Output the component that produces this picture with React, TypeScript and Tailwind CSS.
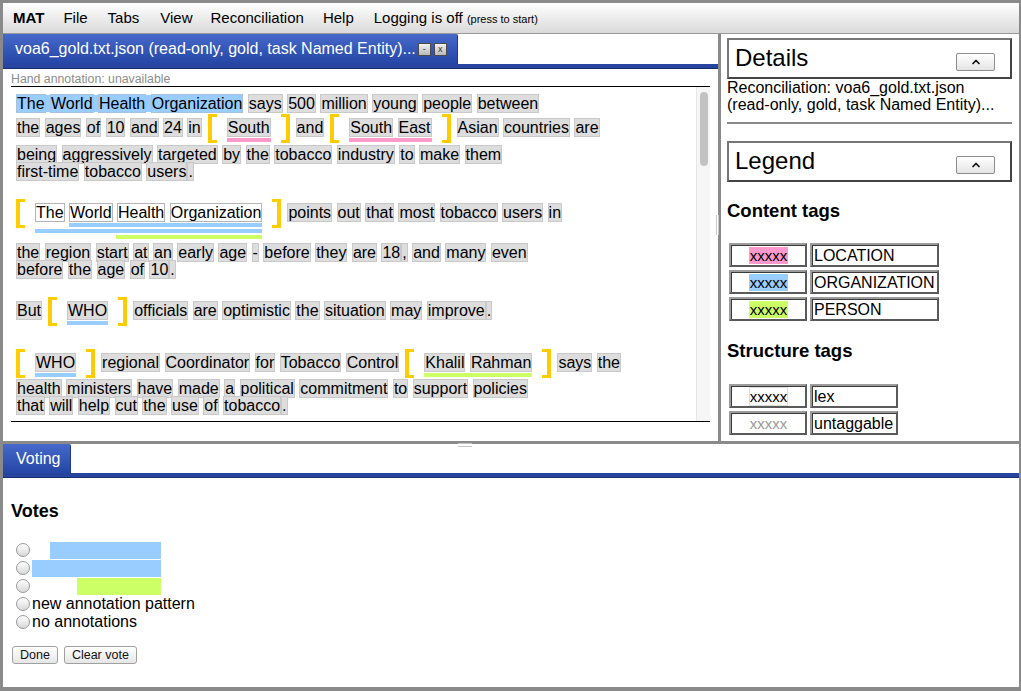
import { Fragment, type ReactNode } from 'react';
import { ChevronUp } from 'lucide-react';

// Reconciliation view: document pane, details/legend sidebar and voting pane

type Tok = { t: string; sp: boolean };
type Bar = { cls: string };

const BOX: Record<string, string> = {
  grey: 'bg-[#dddddd] border border-[#c9c9c9]',
  white: 'bg-white border border-[#b5b5b5]',
  blue: 'border border-[#a6c2e0]',
};

const tokenize = (s: string): Tok[] =>
  s.split(' ').flatMap((w, i) => {
    const m = w.match(/^(.+?)([.,]?)$/)!;
    const out: Tok[] = [{ t: m[1], sp: i > 0 }];
    if (m[2]) out.push({ t: m[2], sp: false });
    return out;
  });

const Words = ({ text, tone = 'grey' }: { text: string; tone?: string }) => (
  <span className="relative top-[1px] whitespace-pre">
    {tokenize(text).map((k, i) => (
      <Fragment key={i}>
        {k.sp ? ' ' : ''}
        <span className={BOX[tone]}>{k.t}</span>
      </Fragment>
    ))}
  </span>
);

const Plain = ({ text }: { text: string }) => (
  <div className="h-[17px] whitespace-nowrap">
    <Words text={text} />
  </div>
);

const Blank = () => <div className="h-[17px]" />;

const Row = ({ children, pb = 'pb-[3px]' }: { children: ReactNode; pb?: string }) => (
  <div className={`flex items-start pt-[3px] ${pb} whitespace-nowrap`}>{children}</div>
);

const Seg = ({ text }: { text: string }) => (
  <span className="mt-[4px] h-[17px]">
    <Words text={text} />
  </span>
);

const Anno = ({ text, bars, tone = 'grey', first }: { text: string; bars: Bar[]; tone?: string; first?: boolean }) => (
  <div className={`flex items-start ${first ? 'mr-[6px]' : 'mx-[6px]'}`}>
    <div className="w-[9px] h-[29px] border-l-[4px] border-y-[3px] border-[#ffcc00]" />
    <div className="flex flex-col px-[10px] pt-[4px]">
      <div className="h-[17px]">
        <Words text={text} tone={tone} />
      </div>
      <div className="flex flex-col gap-[2px] mt-[3px]">
        {bars.map((b, i) => (
          <div key={i} className={`h-[4px] ${b.cls}`} />
        ))}
      </div>
    </div>
    <div className="w-[9px] h-[29px] border-r-[4px] border-y-[3px] border-[#ffcc00]" />
  </div>
);

const TextBody = () => (
  <div className="text-[16px] leading-[17px]">
    <div className="h-[17px] whitespace-nowrap">
      <span className="relative top-[1px] bg-[#99ccff]">
        <span className="relative top-[-1px]">
          <Words text="The World Health Organization" tone="blue" />
        </span>
      </span>{' '}
      <Words text="says 500 million young people between" />
    </div>
    <Row pb="pb-[2px]">
      <Seg text="the ages of 10 and 24 in" />
      <Anno text="South" bars={[{ cls: 'bg-[#ff99cc]' }]} />
      <Seg text="and" />
      <Anno text="South East" bars={[{ cls: 'bg-[#ff99cc]' }]} />
      <Seg text="Asian countries are" />
    </Row>
    <Plain text="being aggressively targeted by the tobacco industry to make them" />
    <Plain text="first-time tobacco users." />
    <Blank />
    <Row pb="pb-[4px]">
      <Anno
        first
        tone="white"
        text="The World Health Organization"
        bars={[{ cls: 'bg-[#99ccff] ml-[34px]' }, { cls: 'bg-[#99ccff]' }, { cls: 'bg-[#ccff66] ml-[81px]' }]}
      />
      <Seg text="points out that most tobacco users in" />
    </Row>
    <Plain text="the region start at an early age - before they are 18, and many even" />
    <Plain text="before the age of 10." />
    <Blank />
    <Row>
      <Seg text="But" />
      <Anno text="WHO" bars={[{ cls: 'bg-[#99ccff]' }]} />
      <Seg text="officials are optimistic the situation may improve." />
    </Row>
    <Blank />
    <Row pb="pb-[1px]">
      <Anno first text="WHO" bars={[{ cls: 'bg-[#99ccff]' }]} />
      <Seg text="regional Coordinator for Tobacco Control" />
      <Anno text="Khalil Rahman" bars={[{ cls: 'bg-[#ccff66]' }]} />
      <Seg text="says the" />
    </Row>
    <Plain text="health ministers have made a political commitment to support policies" />
    <Plain text="that will help cut the use of tobacco." />
  </div>
);

const MENU = [
  { label: 'File', cls: 'ml-[19px]' },
  { label: 'Tabs', cls: 'ml-[20px]' },
  { label: 'View', cls: 'ml-[21px]' },
  { label: 'Reconciliation', cls: 'ml-[18px]' },
  { label: 'Help', cls: 'ml-[19px]' },
];

const MenuBar = () => (
  <div className="h-[31px] shrink-0 border-b border-[#999] bg-linear-to-b from-white to-[#dadada] flex items-center pl-[10px] text-[15px]">
    <span className="font-bold">MAT</span>
    {MENU.map((m) => (
      <span key={m.label} className={m.cls}>
        {m.label}
      </span>
    ))}
    <span className="ml-[20px]">
      Logging is off <span className="text-[11px]">(press to start)</span>
    </span>
  </div>
);

const TabBtn = ({ label }: { label: string }) => (
  <span className="w-[13px] h-[13px] border border-[#4a4a4a] bg-linear-to-b from-[#f2f2f2] to-[#b9b9b9] text-[9px] leading-none text-[#333] flex items-center justify-center">
    {label}
  </span>
);

const DocPanel = () => (
  <div className="w-[715px] flex flex-col">
    <div className="flex">
      <div className="w-[455px] h-[30px] bg-linear-to-b from-[#4669cb] to-[#2546a5] rounded-tr-[2px] border-r border-[#1d3a8c] text-white text-[16px] flex items-center pl-[12px]">
        <span>voa6_gold.txt.json (read-only, gold, task Named Entity)...</span>
        <span className="ml-[2px] flex gap-[3px]">
          <TabBtn label="-" />
          <TabBtn label="x" />
        </span>
      </div>
    </div>
    <div className="h-[5px] bg-[#27459f] border-b border-[#15306f]" />
    <div className="pl-[8px] pt-[4px] h-[17px] text-[12.3px] leading-[13px] text-[#8c8c8c]">Hand annotation: unavailable</div>
    <div className="mx-[8px] border-y border-black h-[336px] flex">
      <div className="flex-1 pl-[5px] pt-[7px] overflow-hidden">
        <TextBody />
      </div>
      <div className="w-[14px] border-l border-[#e6e6e6] bg-[#f6f6f6]">
        <div className="mt-[5px] mx-auto w-[8px] h-[74px] rounded-full bg-[#c2c2c2]" />
      </div>
    </div>
  </div>
);

const CollapseBtn = () => (
  <div className="w-[39px] h-[18px] mt-[13px] rounded-[2px] border border-[#8c8c8c] bg-linear-to-b from-white to-[#e4e4e4] flex items-center justify-center">
    <ChevronUp size={12} strokeWidth={3.5} color="#111" />
  </div>
);

const SectionBox = ({ title }: { title: string }) => (
  <div className="h-[41px] border-2 border-t-[#777] border-l-[#777] border-r-[#444] border-b-[#444] flex items-start justify-between pl-[6px] pr-[15px]">
    <span className="text-[24px] leading-[28px] mt-[4px]">{title}</span>
    <CollapseBtn />
  </div>
);

const Cell = ({ w, children, center }: { w: string; children: ReactNode; center?: boolean }) => (
  <div className={`${w} h-[24px] border-2 border-t-[#9c9c9c] border-l-[#9c9c9c] border-r-[#5a5a5a] border-b-[#5a5a5a]`}>
    <div className={`h-full border-t border-l border-[#3a3a3a] flex items-center ${center ? 'justify-center' : 'pl-[1px]'}`}>{children}</div>
  </div>
);

const CONTENT_TAGS = [
  { name: 'LOCATION', sample: 'bg-[#ff99cc]' },
  { name: 'ORGANIZATION', sample: 'bg-[#99ccff]' },
  { name: 'PERSON', sample: 'bg-[#ccff66]' },
];

const SidePanel = () => (
  <div className="w-[298px] pl-[6px] pr-[7px] pt-[4px] flex flex-col">
    <SectionBox title="Details" />
    <div className="text-[16px] leading-[17px]">
      <div>Reconciliation: voa6_gold.txt.json</div>
      <div>(read-only, gold, task Named Entity)...</div>
    </div>
    <div className="mt-[9px] border-t-2 border-[#8a8a8a]" />
    <div className="mt-[17px]">
      <SectionBox title="Legend" />
    </div>
    <div className="mt-[19px] text-[18.5px] leading-[20px] font-bold">Content tags</div>
    <div className="mt-[22px] ml-[2px] flex flex-col gap-[3px]">
      {CONTENT_TAGS.map((c) => (
        <div key={c.name} className="flex gap-[3px]">
          <Cell w="w-[78px]" center>
            <span className={`${c.sample} text-[15px] leading-[17px] px-[1px]`}>xxxxx</span>
          </Cell>
          <Cell w="w-[129px]">
            <span className="text-[16px]">{c.name}</span>
          </Cell>
        </div>
      ))}
    </div>
    <div className="mt-[20px] text-[18.5px] leading-[20px] font-bold">Structure tags</div>
    <div className="mt-[23px] ml-[2px] flex flex-col gap-[3px]">
      <div className="flex gap-[3px]">
        <Cell w="w-[78px]" center>
          <span className="bg-white border border-[#dcdcdc] text-[15px] leading-[17px]">xxxxx</span>
        </Cell>
        <Cell w="w-[88px]">
          <span className="text-[16px]">lex</span>
        </Cell>
      </div>
      <div className="flex gap-[3px]">
        <Cell w="w-[78px]" center>
          <span className="text-[#9a9a9a] text-[15px] leading-[17px]">xxxxx</span>
        </Cell>
        <Cell w="w-[88px]">
          <span className="text-[16px]">untaggable</span>
        </Cell>
      </div>
    </div>
  </div>
);

const VOTES = [
  { bar: 'bg-[#99ccff] ml-[18px] w-[111px]' },
  { bar: 'bg-[#99ccff] w-[129px]' },
  { bar: 'bg-[#ccff66] ml-[45px] w-[84px]' },
];

const Radio = () => (
  <span className="w-[14px] h-[14px] rounded-full border border-[#9a9a9a] bg-linear-to-b from-white to-[#d8d8d8] shrink-0" />
);

const Btn = ({ label }: { label: string }) => (
  <button className="h-[18px] px-[7px] rounded-[3px] border border-[#a0a0a0] bg-linear-to-b from-white to-[#e6e6e6] text-[12.5px] leading-none text-[#111]">
    {label}
  </button>
);

const VotingPanel = () => (
  <div className="flex-1 flex flex-col">
    <div className="h-[29px] w-[68px] bg-linear-to-b from-[#4669cb] to-[#2546a5] border-r border-[#1d3a8c] rounded-tr-[2px] text-white text-[16px] flex items-center pl-[13px]">
      Voting
    </div>
    <div className="h-[5px] bg-[#27459f] border-b border-[#15306f]" />
    <div className="pl-[8px]">
      <div className="mt-[22px] text-[18px] leading-[22px] font-bold">Votes</div>
      <div className="mt-[19px] flex flex-col text-[16px]">
        {VOTES.map((v, i) => (
          <div key={i} className="h-[18px] flex items-center pl-[5px]">
            <Radio />
            <div className="ml-[2px] w-[129px] h-[17px]">
              <div className={`h-[17px] ${v.bar}`} />
            </div>
          </div>
        ))}
        <div className="h-[18px] flex items-center pl-[5px]">
          <Radio />
          <span className="ml-[2px] leading-[18px]">new annotation pattern</span>
        </div>
        <div className="h-[18px] flex items-center pl-[5px]">
          <Radio />
          <span className="ml-[2px] leading-[18px]">no annotations</span>
        </div>
      </div>
      <div className="mt-[15px] ml-[1px] flex gap-[6px]">
        <Btn label="Done" />
        <Btn label="Clear vote" />
      </div>
    </div>
  </div>
);

export default function App() {
  return (
    <div className="w-[1021px] h-[691px] bg-white border-l-[3px] border-t-[3px] border-r-[2px] border-b-[4px] border-[#8a8a8a] flex flex-col overflow-hidden text-black font-['Liberation_Sans',Arial,Helvetica,sans-serif]">
      <MenuBar />
      <div className="flex h-[407px] shrink-0">
        <DocPanel />
        <div className="relative w-[3px] bg-[#8a8a8a]">
          {/* splitter grip */}
          <div className="absolute top-[181px] left-[-2px] w-[3px] h-[20px] border-x border-[#c8c8c8]" />
        </div>
        <SidePanel />
      </div>
      <div className="relative h-[3px] shrink-0 bg-[#8a8a8a]">
        <div className="absolute top-[2px] left-[455px] w-[14px] h-[4px] border-y border-[#c4c4c4]" />
      </div>
      <VotingPanel />
    </div>
  );
}
